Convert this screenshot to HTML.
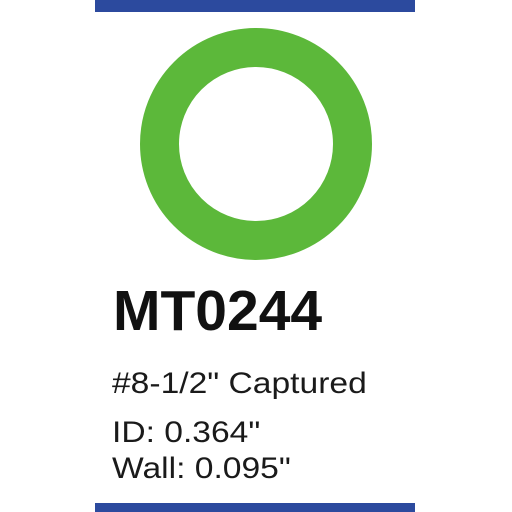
<!DOCTYPE html>
<html><head><style>
html,body{margin:0;padding:0;background:#fff;width:512px;height:512px;overflow:hidden;position:relative;font-family:"Liberation Sans",Arial,sans-serif;color:#111}
.bar{position:absolute;left:95px;width:320px;background:#2c4a9e}
.t{position:absolute;left:112px;line-height:1;white-space:nowrap}
.s{transform:scaleX(1.12);transform-origin:0 0;color:#1a1a1a;font-size:30px}
</style></head><body>
<div class="bar" style="top:0;height:12px"></div>
<svg style="position:absolute;left:0;top:0" width="512" height="512">
<circle cx="256" cy="144" r="96.5" fill="none" stroke="#5cb83a" stroke-width="39"/>
</svg>
<div class="t" style="top:283px;font-size:57px;font-weight:bold;left:113px">MT0244</div>
<div class="t s" style="top:369px">#8-1/2" Captured</div>
<div class="t s" style="top:418px">ID: 0.364"</div>
<div class="t s" style="top:454px">Wall: 0.095"</div>
<div class="bar" style="top:503px;height:9px"></div>
</body></html>
